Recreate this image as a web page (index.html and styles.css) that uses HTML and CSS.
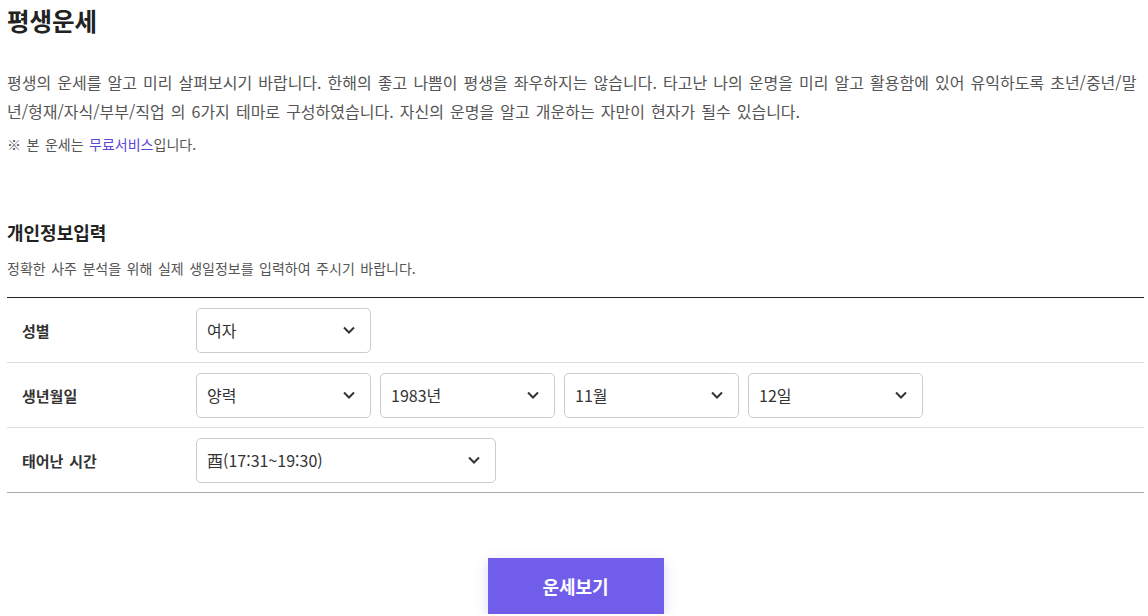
FILE: index.html
```html
<!DOCTYPE html>
<html lang="ko">
<head>
<meta charset="utf-8">
<title>평생운세</title>
<link rel="stylesheet" href="styles.css">
</head>
<body>
<div class="wrap">
  <h1 class="title">평생운세</h1>
  <p class="desc">평생의 운세를 알고 미리 살펴보시기 바랍니다. 한해의 좋고 나쁨이 평생을 좌우하지는 않습니다. 타고난 나의 운명을 미리 알고 활용함에 있어 유익하도록 초년/중년/말년/형재/자식/부부/직업 의 6가지 테마로 구성하였습니다. 자신의 운명을 알고 개운하는 자만이 현자가 될수 있습니다.</p>
  <p class="note">※ 본 운세는 <a class="link" href="#">무료서비스</a>입니다.</p>

  <h2 class="sec-title">개인정보입력</h2>
  <p class="sec-desc">정확한 사주 분석을 위해 실제 생일정보를 입력하여 주시기 바랍니다.</p>

  <div class="form">
    <div class="row">
      <div class="label">성별</div>
      <div class="fields">
        <div class="select"><span>여자</span><svg class="chev" viewBox="0 0 12 8"><path d="M1 1.5 6 6.5 11 1.5"/></svg></div>
      </div>
    </div>
    <div class="row">
      <div class="label">생년월일</div>
      <div class="fields">
        <div class="select"><span>양력</span><svg class="chev" viewBox="0 0 12 8"><path d="M1 1.5 6 6.5 11 1.5"/></svg></div>
        <div class="select"><span>1983년</span><svg class="chev" viewBox="0 0 12 8"><path d="M1 1.5 6 6.5 11 1.5"/></svg></div>
        <div class="select"><span>11월</span><svg class="chev" viewBox="0 0 12 8"><path d="M1 1.5 6 6.5 11 1.5"/></svg></div>
        <div class="select"><span>12일</span><svg class="chev" viewBox="0 0 12 8"><path d="M1 1.5 6 6.5 11 1.5"/></svg></div>
      </div>
    </div>
    <div class="row last">
      <div class="label">태어난 시간</div>
      <div class="fields">
        <div class="select wide"><span>酉(17:31~19:30)</span><svg class="chev" viewBox="0 0 12 8"><path d="M1 1.5 6 6.5 11 1.5"/></svg></div>
      </div>
    </div>
  </div>

  <div class="actions">
    <button class="btn" type="button">운세보기</button>
  </div>
</div>
</body>
</html>
```

FILE: styles.css
```css
* { box-sizing: border-box; }
html, body { margin: 0; padding: 0; background: #fff; }
body {
  font-family: "Noto Sans CJK KR", "Noto Sans", sans-serif;
  color: #333;
  word-spacing: 0.1em;
}
.wrap {
  width: 1137px;
  margin-left: 7px;
}
.title {
  margin: 4px 0 0;
  font-size: 24.5px;
  line-height: 34px;
  font-weight: 700;
  color: #222;
}
.desc {
  margin: 29.5px 0 0;
  font-size: 16px;
  line-height: 29px;
  color: #555;
}
.note {
  margin: 8.5px 0 0;
  font-size: 14px;
  line-height: 20px;
  color: #555;
}
.link {
  color: #5b45d8;
  text-decoration: none;
}
.sec-title {
  margin: 65px 0 0;
  font-size: 18px;
  line-height: 26px;
  font-weight: 700;
  color: #222;
}
.sec-desc {
  margin: 13px 0 0;
  font-size: 14px;
  line-height: 20px;
  color: #555;
}
.form {
  margin-top: 19px;
  border-top: 1px solid #222;
}
.row {
  display: flex;
  align-items: center;
  height: 65px;
  border-bottom: 1px solid #ddd;
}
.row.last { border-bottom-color: #aaa; }
.label {
  width: 189px;
  padding-left: 15px;
  font-size: 15px;
  font-weight: 700;
  color: #333;
}
.fields {
  display: flex;
  gap: 9px;
}
.select {
  display: flex;
  align-items: center;
  justify-content: space-between;
  width: 175px;
  height: 45px;
  padding: 0 15px 0 10px;
  border: 1px solid #ccc;
  border-radius: 5px;
  font-size: 16px;
  color: #333;
}
.select.wide { width: 300px; }
.chev {
  width: 12px;
  height: 8px;
  fill: none;
  stroke: #333;
  stroke-width: 2;
}
.actions {
  display: flex;
  justify-content: center;
  margin-top: 65px;
}
.btn {
  width: 176px;
  height: 56px;
  border: 0;
  background: #705de9;
  color: #fff;
  font-family: inherit;
  font-size: 18px;
  font-weight: 700;
  box-shadow: 0 4px 12px rgba(112, 93, 233, 0.25);
  cursor: pointer;
}
```
